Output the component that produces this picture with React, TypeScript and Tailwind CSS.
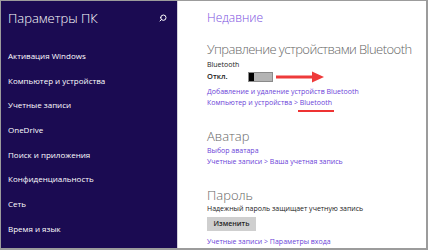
import { Search } from "lucide-react";

const menu = [
  "Активация Windows",
  "Компьютер и устройства",
  "Учетные записи",
  "OneDrive",
  "Поиск и приложения",
  "Конфиденциальность",
  "Сеть",
  "Время и язык",
];

const font = { fontFamily: '"Open Sans", "Noto Sans", sans-serif' };

function Toggle() {
  return (
    <div className="flex h-[10px] w-[25px] border border-[#8a8a8a] bg-[#b4b4b4]">
      <div className="h-full w-[5px] bg-black" />
    </div>
  );
}

function Arrow() {
  return (
    <svg width="50" height="12" viewBox="0 0 50 12" className="ml-[3px]">
      <line x1="0" y1="6" x2="38" y2="6" stroke="#ee3a3a" strokeWidth="3" />
      <polygon points="36,0.5 48,6 36,11.5" fill="#ee3a3a" />
    </svg>
  );
}

export default function App() {
  return (
    <div
      className="flex h-[250px] w-[428px] border-t border-l border-r-2 border-b-2 border-[#9c9c9c] bg-white"
      style={font}
    >
      <aside className="flex w-[176px] shrink-0 flex-col bg-[#1b0b52] pl-[7px] pt-[7px] text-white">
        <div className="flex h-[20px] items-center justify-between pr-[10px]">
          <span className="text-[13px] font-light leading-none">Параметры ПК</span>
          <Search size={8} strokeWidth={3} className="-scale-x-100" />
        </div>
        <ul className="mt-[15.6px] text-[8px]">
          {menu.map((m) => (
            <li key={m} className="flex h-[24.7px] items-center">
              {m}
            </li>
          ))}
        </ul>
      </aside>
      <div className="w-px bg-[#d4d2dc]" />
      <main className="flex flex-1 flex-col whitespace-nowrap pl-[29px] pt-[8px] text-[7px] text-[#222]">
        <div className="flex h-[20px] items-center text-[12px] font-light text-[#7a4ee0]">Недавние</div>
        <div className="mt-[13px] flex h-[19px] items-center text-[13px] font-light tracking-[-0.55px] text-[#666]">
          Управление устройствами Bluetooth
        </div>
        <div className="flex h-[12px] items-center">Bluetooth</div>
        <div className="flex h-[14px] items-center">
          <span className="w-[41px] text-[7.5px] font-semibold">Откл.</span>
          <Toggle />
          <Arrow />
        </div>
        <div className="mt-[3px] flex h-[12px] items-center text-[#6b3fd8]">
          Добавление и удаление устройств Bluetooth
        </div>
        <div className="flex h-[13px] items-center text-[#6b3fd8]">
          Компьютер и устройства &gt;&nbsp;
          <span className="relative">
            Bluetooth
            <span className="absolute -bottom-[3px] -left-[2px] -right-[2px] h-[2px] bg-[#e33]" />
          </span>
        </div>
        <div className="mt-[18px] flex h-[18px] items-center text-[13px] font-light text-[#666]">Аватар</div>
        <div className="flex h-[12px] items-center text-[#6b3fd8]">Выбор аватара</div>
        <div className="flex h-[12px] items-center text-[#6b3fd8]">Учетные записи &gt; Ваша учетная запись</div>
        <div className="mt-[20px] flex h-[16px] items-center text-[13px] font-light text-[#666]">Пароль</div>
        <div className="flex h-[12px] items-center">Надежный пароль защищает учетную запись</div>
        <button className="mt-[2px] flex h-[15px] w-[49px] items-center justify-center bg-[#cfcfcf] font-semibold">
          Изменить
        </button>
        <div className="mt-[6px] flex h-[12px] items-center text-[#6b3fd8]">Учетные записи &gt; Параметры входа</div>
      </main>
    </div>
  );
}
